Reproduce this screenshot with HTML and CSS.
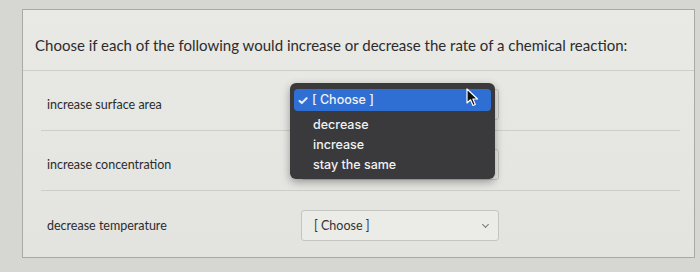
FILE: index.html
```html
<!DOCTYPE html>
<html lang="en">
<head>
    <meta charset="UTF-8">
    <meta name="viewport" content="width=device-width, initial-scale=1.0">
    <title>Rate of Reaction</title>
    <link rel="stylesheet" href="styles.css">
</head>
<body>

    <div class="card">
        <p class="question">Choose if each of the following would increase or decrease the rate of a chemical reaction:</p>

        <div class="rows">
            <div class="row">
                <span class="label">increase surface area</span>
                <div class="select-wrap">
                    <div class="select">[ Choose ]<span class="chevron"></span></div>

                    <!-- open native menu -->
                    <ul class="menu">
                        <li class="active"><span class="check">✓</span>[ Choose ]</li>
                        <li>decrease</li>
                        <li>increase</li>
                        <li>stay the same</li>
                    </ul>
                    <svg class="cursor" width="14" height="20" viewBox="0 0 14 20">
                        <path d="M1 1 L1 15 L4.5 11.8 L7 17.5 L9.3 16.5 L6.9 11 L11.5 11 Z" fill="#111" stroke="#fff" stroke-width="1.2" stroke-linejoin="round"/>
                    </svg>
                </div>
            </div>

            <div class="row">
                <span class="label">increase concentration</span>
                <div class="select-wrap">
                    <div class="select">[ Choose ]<span class="chevron"></span></div>
                </div>
            </div>

            <div class="row">
                <span class="label">decrease temperature</span>
                <div class="select-wrap">
                    <div class="select">[ Choose ]<span class="chevron"></span></div>
                </div>
            </div>
        </div>
    </div>

</body>
</html>
```

FILE: styles.css
```css
body {
    margin: 0;
    background: #d6d6d2;
    font-family: 'Lato', 'Open Sans', sans-serif;
    color: #2c2c2c;
    height: 272px;
    overflow: hidden;
}

.card {
    margin: 9px 5px 0 22px;
    height: 249px;
    background: linear-gradient(to bottom, #e9e9e6, #e3e3e0);
    border: 1px solid #a9a9a5;
    box-sizing: border-box;
}

.question {
    margin: 0;
    padding: 26px 12px 16px;
    font-size: 15px;
    line-height: 18px;
    border-bottom: 1px solid #cdcdc9;
}

.rows {
    padding: 0 14px 0 18px;
}

.row {
    display: flex;
    align-items: center;
    height: 60px;
    padding-top: 8px;
    box-sizing: border-box;
    border-bottom: 1px solid #cdcdc9;
}

.row:last-child {
    border-bottom: none;
}

.label {
    width: 260px;
    padding-left: 6px;
    box-sizing: border-box;
    font-size: 12.5px;
}

.select-wrap {
    position: relative;
}

.select {
    position: relative;
    width: 198px;
    height: 31px;
    box-sizing: border-box;
    padding: 7px 12px;
    font-size: 12.5px;
    color: #333;
    background: #ebebe8;
    border: 1px solid #c4c4c0;
    border-radius: 3px;
}

.chevron {
    position: absolute;
    right: 10px;
    top: 11px;
    width: 4px;
    height: 4px;
    border-right: 1.5px solid #777;
    border-bottom: 1.5px solid #777;
    transform: rotate(45deg);
}

.menu {
    position: absolute;
    z-index: 10;
    left: -11px;
    top: -6px;
    width: 205px;
    margin: 0;
    padding: 6px 4px 4px;
    list-style: none;
    box-sizing: border-box;
    background: #3a3a3c;
    border-radius: 6px;
    box-shadow: 0 3px 8px rgba(0, 0, 0, 0.35);
    font-family: 'Inter', 'Open Sans', sans-serif;
    font-size: 12.5px;
    font-weight: 500;
    color: #f2f2f2;
}

.menu li {
    height: 20px;
    line-height: 20px;
    padding-left: 19px;
}

.menu li.active {
    position: relative;
    height: 22px;
    line-height: 22px;
    margin-bottom: 4px;
    background: #2f6fd4;
    border-radius: 4px;
    padding-left: 18px;
}

.check {
    position: absolute;
    left: 3px;
    font-size: 13px;
    font-weight: 700;
}

.cursor {
    position: absolute;
    z-index: 11;
    left: 165px;
    top: -1px;
}
```
